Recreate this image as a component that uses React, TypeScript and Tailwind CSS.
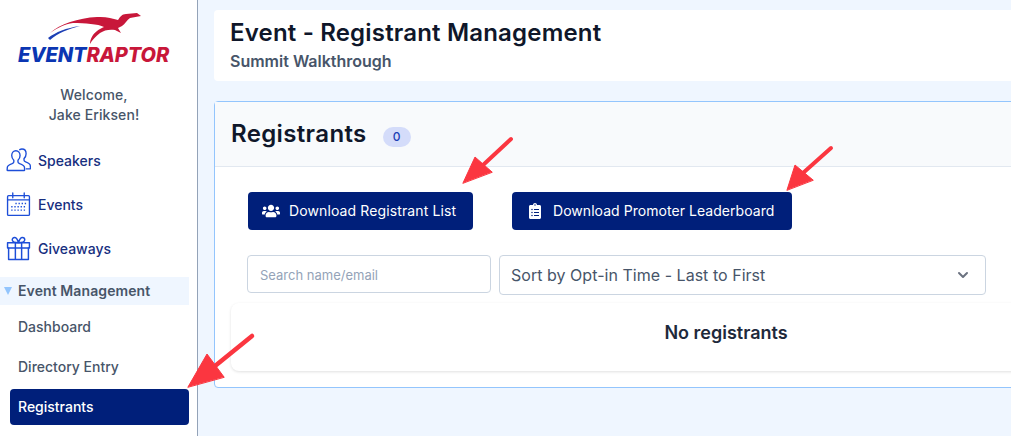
import { FaClipboardList, FaUsers } from "react-icons/fa";
import { HiChevronDown } from "react-icons/hi";

function UsersIcon() {
  return (
    <svg viewBox="0 0 24 24" className="h-[25px] w-[25px]" fill="none" stroke="#1d4ed8" strokeWidth={1.3} strokeLinejoin="round" strokeLinecap="round">
      <path d="M9.5 2.6c-2.5 0-4 2-4 4.6 0 2 .9 3.6 2 4.6v1.6c0 .8-.6 1.1-1.6 1.6-2 .8-4.4 1.8-4.6 3.4l-.2 2.6c0 .4.2.6.6.6h15.6c.4 0 .6-.2.6-.6l-.2-2.6c-.2-1.6-2.6-2.6-4.6-3.4-1-.5-1.6-.8-1.6-1.6v-1.6c1.100-1 2-2.600 2-4.600 0-2.600-1.500-4.600-4-4.600z" />
      <path d="M13.200 1.600c.6-.4 1.300-.6 2.100-.6 2.500 0 4 2 4 4.600 0 2-.9 3.600-2 4.600v1.600c0 .8.6 1.100 1.600 1.600 2 .8 4.200 1.800 4.400 3.400l.2 2.600c0 .4-.2.6-.6.6h-3.400" />
    </svg>
  );
}

function CalendarIcon() {
  return (
    <svg viewBox="0 0 24 24" className="h-[25px] w-[25px]" fill="none" stroke="#1d4ed8" strokeWidth={1.3} strokeLinecap="round" strokeLinejoin="round">
      <rect x="1.500" y="3.500" width="21" height="19" rx="1" />
      <path d="M1.500 7.500h21M6.500 1v4.500M17.500 1v4.500" />
      <path strokeWidth={1.400} strokeDasharray="1.300 1.700" strokeLinecap="butt" d="M9 11h11M5 14.200h15M5 17.400h15" />
    </svg>
  );
}

function GiftIcon() {
  return (
    <svg viewBox="0 0 24 24" className="h-[25px] w-[25px]" fill="none" stroke="#1d4ed8" strokeWidth={1.400} strokeLinecap="round" strokeLinejoin="round">
      <rect x="1.500" y="6.500" width="21" height="5" />
      <path d="M2.500 11.500v11h19v-11M9 6.500v16M15 6.500v16" />
      <path d="M12 6.500c-.8-3-2-5-3.800-5-1.400 0-2.200 1-2.200 2.200 0 1.800 2 2.800 6 2.800zM12 6.500c.8-3 2-5 3.800-5 1.400 0 2.200 1 2.200 2.200 0 1.800-2 2.800-6 2.800z" />
    </svg>
  );
}

function Logo() {
  return (
    <div className="flex w-[153px] flex-col items-start">
      <svg viewBox="18 10 153 36" className="h-[36px] w-[153px]">
        <path
          fill="#c8173a"
          d="M50 33C60 24 78 18 97 17C106 16.500 112 18 118 20C120 17 122 14 126 14L137 13L141 16L130 18C127 20 125 24 122 26L118 28L121 33L115 30C110 29 104 30 100 33C96 36 92 40 90 44C90 39 93 34 97 31C99 29 102 28 104 27C98 24 85 23 73 23C65 24 57 28 50 33z"
        />
        <path fill="#1d3fb5" d="M48 38C56 32 66 28 80 26C68 29 58 33 50 40z" />
      </svg>
      <div className="-mt-[1px] text-[20px] leading-[20px] font-extrabold tracking-[-0.1px] whitespace-nowrap italic">
        <span className="text-[#0b36b2]">EVENT</span>
        <span className="text-[#c8173a]">RAPTOR</span>
      </div>
    </div>
  );
}

const navItems = [
  { label: "Speakers", icon: <UsersIcon /> },
  { label: "Events", icon: <CalendarIcon /> },
  { label: "Giveaways", icon: <GiftIcon /> },
];

export default function App() {
  return (
    <div className="relative flex h-[436px] w-[1011px] overflow-hidden bg-[#eff6ff] font-['Inter',sans-serif]">
      <aside className="flex w-[198px] shrink-0 flex-col border-r border-[#94a3b8] bg-white">
        <div className="flex pt-[10px] pl-[18px]">
          <Logo />
        </div>
        <p className="mt-[20px] pr-[9px] text-center text-sm leading-[20px] font-medium tracking-[0.1px] text-[#475569]">
          Welcome,
          <br />
          Jake Eriksen!
        </p>
        <nav className="mt-[23px] flex flex-col gap-[19px] pl-[6px]">
          {navItems.map((item) => (
            <div key={item.label} className="flex h-[25px] items-center gap-[7px]">
              {item.icon}
              <span className="text-sm font-medium text-[#172f7f]">{item.label}</span>
            </div>
          ))}
        </nav>
        <div className="mt-[16px] mr-2 flex h-[28px] items-center gap-[6px] bg-[#eff6ff] pl-1">
          <span className="h-0 w-0 border-x-[4.500px] border-t-[8px] border-x-transparent border-t-[#93c5fd]" />
          <span className="text-sm font-semibold tracking-[0.1px] text-[#475569]">Event Management</span>
        </div>
        <div className="mt-[2px] flex flex-col pr-2 pl-[10px]">
          <div className="flex h-[40px] items-center pl-2 text-sm font-medium text-[#475569]">Dashboard</div>
          <div className="flex h-[40px] items-center pl-2 text-sm font-medium text-[#475569]">Directory Entry</div>
          <div className="mt-[2px] flex h-[36px] items-center rounded bg-[#001f7a] pl-2 text-sm font-medium text-white">Registrants</div>
        </div>
      </aside>

      <main className="flex w-[1042px] shrink-0 flex-col pt-[10px] pl-4">
        <header className="h-[71px] rounded bg-white pt-[7px] pl-4">
          <h1 className="text-2xl leading-[32px] font-semibold tracking-[0.18px] text-[#0f172a]">Event - Registrant Management</h1>
          <p className="text-base leading-[24px] font-semibold text-[#475569]">Summit Walkthrough</p>
        </header>

        <section className="mt-5 h-[287px] rounded border border-[#93c5fd] bg-white">
          <div className="flex h-[65px] items-center gap-[16px] border-b border-[#e2e8f0] bg-[#f8fafc] pl-4">
            <h2 className="text-2xl leading-[32px] font-semibold tracking-[0.35px] text-[#0f172a]">Registrants</h2>
            <span className="mt-[6px] flex h-5 w-7 items-center justify-center rounded-full bg-[#d4dcfa] text-xs font-medium text-[#1d3fb5]">0</span>
          </div>

          <div className="flex gap-[39px] pt-[25px] pl-[33px]">
            <button className="flex h-[38px] w-[225px] items-center gap-[9px] rounded bg-[#001f7a] pl-[14px] text-sm font-normal tracking-[0.12px] text-white">
              <FaUsers className="h-[18px] w-[18px]" />
              Download Registrant List
            </button>
            <button className="flex h-[38px] w-[280px] items-center gap-[11px] rounded bg-[#001f7a] pl-4 text-sm font-normal tracking-[0.05px] text-white">
              <FaClipboardList className="h-[16px] w-[14px]" />
              Download Promoter Leaderboard
            </button>
          </div>

          <div className="flex items-start gap-2 pt-[25px] pl-[32px]">
            <input
              placeholder="Search name/email"
              className="h-[38px] w-[244px] rounded border border-[#cbd5e1] bg-white px-3 pt-[1px] text-[13px] text-[#334155] outline-none placeholder:text-[#94a3b8]"
            />
            <div className="flex h-[40px] w-[487px] items-center justify-between rounded border border-[#cbd5e1] bg-white pr-[12px] pl-[11px] text-base tracking-[0.03px] text-[#475569]">
              Sort by Opt-in Time - Last to First
              <HiChevronDown className="h-5 w-5 text-[#6b7280]" />
            </div>
          </div>

          <div className="mt-2 ml-4 flex h-[68px] w-[990px] items-center justify-center rounded-lg bg-white pb-[8px] text-lg font-semibold text-[#1e293b] shadow-[0_1px_3px_rgba(0,0,0,0.12)]">
            No registrants
          </div>
        </section>
      </main>

      {/* annotation arrows drawn over the page */}
      <svg viewBox="0 0 1011 436" className="pointer-events-none absolute inset-0 h-[436px] w-[1011px]">
        <g fill="#fb3640" stroke="#fb3640" strokeLinecap="round" strokeLinejoin="round">
          <path fill="none" strokeWidth="4" d="M511 139L482 166" />
          <path strokeWidth="1" d="M463 183L475 157L492 172z" />
          <path fill="none" strokeWidth="4" d="M831 148L803 173" />
          <path strokeWidth="1" d="M787 190L795 165L813 180z" />
          <path fill="none" strokeWidth="4.500" d="M252 336L215 366" />
          <path strokeWidth="1" d="M188 387L207 354L224 377z" />
        </g>
      </svg>
    </div>
  );
}
